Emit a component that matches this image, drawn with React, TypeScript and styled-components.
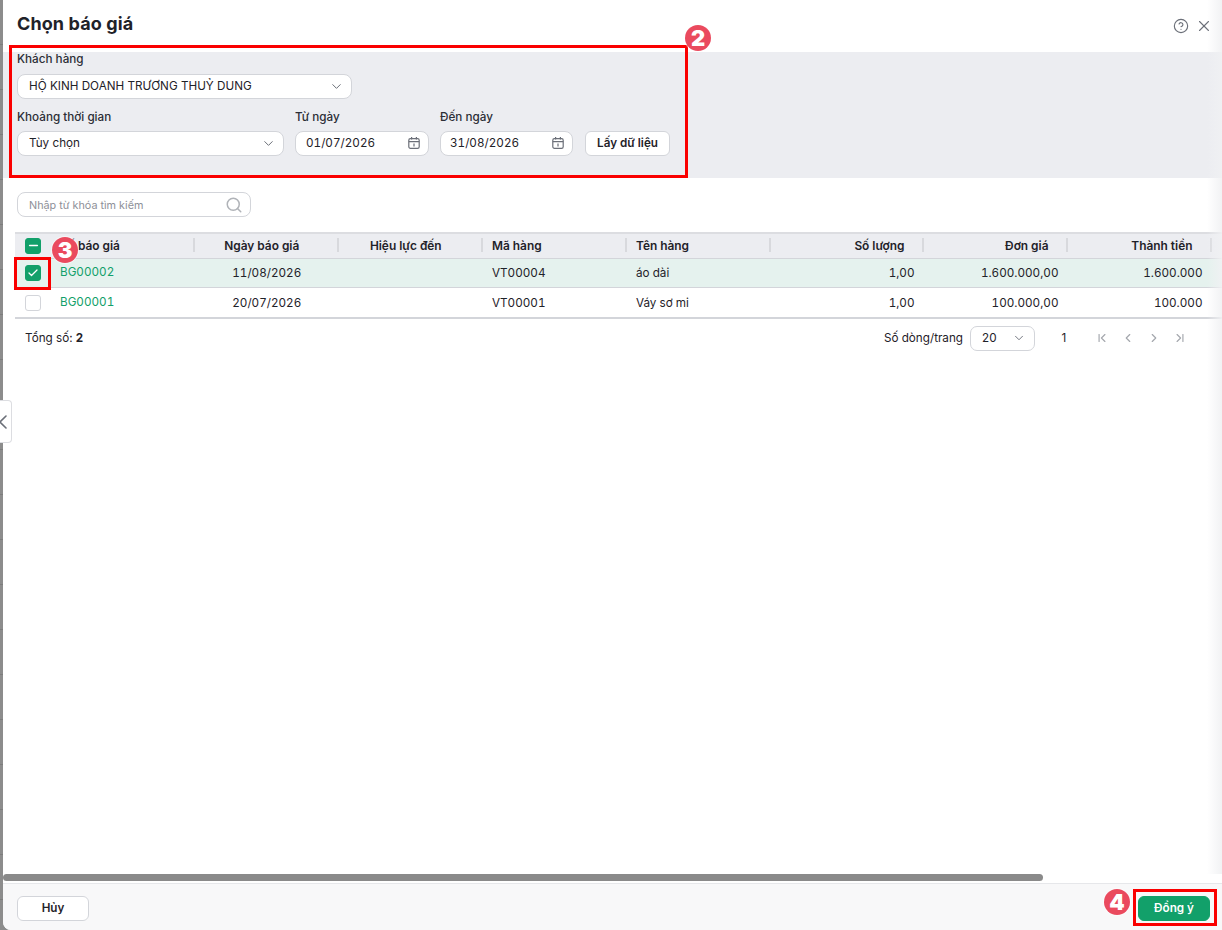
import * as React from 'react';
import styled, { createGlobalStyle } from 'styled-components';
import {
  Check,
  ChevronDown,
  ChevronFirst,
  ChevronLast,
  ChevronLeft,
  ChevronRight,
  CircleHelp,
  Minus,
  Search,
  X,
} from 'lucide-react';

const GlobalStyle = createGlobalStyle`
  html, body {
    margin: 0;
    padding: 0;
    background: #8a8a8a;
  }
  * {
    box-sizing: border-box;
  }
  body {
    font-family: Inter, "Noto Sans", sans-serif;
    font-size: 11.7px;
    color: #1f2229;
  }
`;

// the dimmed app behind the dialog only shows as a thin strip on the left
const Page = styled.div`
  position: relative;
  width: 1222px;
  height: 930px;
  padding-left: 3px;
  overflow: hidden;
  background: repeating-linear-gradient(#8c8c8c 0 44px, #7d7d7d 44px 45px);
`;

const Dialog = styled.div`
  display: flex;
  flex-direction: column;
  height: 100%;
  background: #fff;
  border-bottom-left-radius: 8px;
  overflow: hidden;
`;

const Header = styled.header`
  display: flex;
  align-items: center;
  justify-content: space-between;
  height: 52px;
  padding: 0 9px 5px 14px;
`;

const Title = styled.h1`
  margin: 0;
  font-size: 18px;
  font-weight: 700;
  letter-spacing: 0.1px;
  color: #1f2229;
`;

const HeaderActions = styled.div`
  display: flex;
  align-items: center;
  gap: 6px;
  margin-top: 5px;
  color: #6b6f78;
`;

const FilterPanel = styled.section`
  display: flex;
  flex-direction: column;
  height: 126px;
  padding: 0 14px;
  background: #ecedf1;
`;

const FieldRow = styled.div`
  display: flex;
  align-items: flex-end;
  gap: 11px;
  margin-top: ${(p: { $top: number }) => p.$top}px;
`;

const Field = styled.label`
  display: flex;
  flex-direction: column;
  gap: ${(p: { $width: number; $gap?: number }) => p.$gap ?? 7}px;
  width: ${(p: { $width: number; $gap?: number }) => p.$width}px;
`;

const FieldLabel = styled.span`
  font-size: 11.7px;
  font-weight: 500;
  line-height: 14px;
  color: #2b2e36;
`;

const Control = styled.div`
  display: flex;
  align-items: center;
  justify-content: space-between;
  height: 25px;
  padding: 0 7px 1px ${(p: { $left?: number }) => p.$left ?? 11}px;
  background: #fff;
  border: 1px solid #d3d5da;
  border-radius: 8px;
  font-size: 11.7px;
  color: #1f2229;
  white-space: nowrap;
  svg {
    flex: none;
    color: #6b6f78;
  }
`;

const DateControl = styled(Control)`
  font-variant-numeric: tabular-nums;
`;

const GhostButton = styled.button`
  height: 25px;
  width: ${(p: { $width: number }) => p.$width}px;
  padding: 0 0 2px;
  background: #fff;
  border: 1px solid #d3d5da;
  border-radius: 6px;
  font: 600 11.7px Inter, sans-serif;
  color: #1f2229;
`;

const FetchButton = styled(GhostButton)`
  margin-left: 1px;
`;

const SearchRow = styled.div`
  height: 54px;
  padding: 14px 0 0 14px;
`;

const SearchBox = styled(Control)`
  width: 234px;
  padding: 1px 7px 0 11px;
  color: #8d9098;
  font-size: 10.8px;
  svg {
    color: #b0b3b8;
  }
`;

const TableWrap = styled.div`
  position: relative;
  margin-left: 12px;
  width: 1300px;
`;

const GRID = '36px repeat(5, 144px) 153px 144px 144px 200px';

const HeadRow = styled.div`
  display: grid;
  grid-template-columns: ${GRID};
  height: 27px;
  padding-bottom: 1px;
  background: #ecedf1;
  border-top: 2px solid #dcdde1;
  border-bottom: 1px solid #d3d5da;
  font-size: 11.9px;
  font-weight: 600;
`;

const Row = styled.div`
  display: grid;
  grid-template-columns: ${GRID};
  height: ${(p: { $height: number; $selected?: boolean }) => p.$height}px;
  background: ${(p: { $selected?: boolean }) => (p.$selected ? '#e5f2ee' : '#fff')};
  border-bottom: 1px solid #d3d5da;
`;

const LastRow = styled(Row)`
  border-bottom: 2px solid #d3d5da;
`;

const HeadCell = styled.div`
  position: relative;
  display: flex;
  align-items: center;
  justify-content: ${(p: { $align?: string }) => p.$align ?? 'flex-start'};
  padding: 0 ${(p: { $align?: string }) => (p.$align ? 19.5 : 9)}px 0 9px;
  white-space: nowrap;
  overflow: hidden;
  &::after {
    content: '';
    position: absolute;
    right: 0;
    top: 4px;
    width: 2px;
    height: 14px;
    background: #d8d9dd;
  }
`;

const Cell = styled.div`
  display: flex;
  align-items: center;
  justify-content: ${(p: { $align?: string }) => p.$align ?? 'flex-start'};
  padding: 0 9.5px 0 9px;
  white-space: nowrap;
  font-size: 11.7px;
  font-variant-numeric: tabular-nums;
`;

const CodeCell = styled(Cell)`
  color: #12a06a;
  padding-bottom: 2px;
`;

const BoxCell = styled.div`
  display: flex;
  align-items: center;
  justify-content: center;
`;

const CheckBox = styled.span`
  display: flex;
  align-items: center;
  justify-content: center;
  width: 16px;
  height: 16px;
  border-radius: 3px;
  background: ${(p: { $on?: boolean }) => (p.$on ? '#12a06a' : '#fff')};
  border: 1px solid ${(p: { $on?: boolean }) => (p.$on ? '#12a06a' : '#d3d5da')};
  color: #fff;
`;

const Pager = styled.div`
  display: flex;
  align-items: center;
  height: 38px;
  padding: 0 35px 0 22px;
`;

const Total = styled.div`
  flex: 1;
  b {
    font-weight: 700;
  }
`;

const PageSizeLabel = styled.span`
  margin-right: 7px;
`;

const PageSize = styled(Control)`
  width: 65px;
  padding: 0 8px 1px 11px;
  border-radius: 7px;
`;

const PageNumber = styled.span`
  width: 58px;
  text-align: center;
`;

const PageIcons = styled.div`
  display: flex;
  gap: 12px;
  color: #a4a7ad;
  margin-left: 2px;
`;

const Spacer = styled.div`
  flex: 1;
`;

const ScrollTrack = styled.div`
  height: 9px;
  padding-bottom: 2px;
  background: #fff;
`;

const ScrollThumb = styled.div`
  height: 7px;
  width: ${(p: { $width: number }) => p.$width}px;
  background: #8a8a8a;
  border-radius: 4px;
`;

const Footer = styled.footer`
  display: flex;
  align-items: center;
  justify-content: space-between;
  height: 47px;
  padding: 3px 12px 0 14px;
  background: #f8f8f9;
  border-top: 1px solid #e6e7ea;
`;

const PrimaryButton = styled(GhostButton)`
  background: #12a06a;
  border-color: #12a06a;
  color: #fff;
`;

const EdgeFade = styled.div`
  position: absolute;
  top: 0;
  right: 0;
  bottom: 56px;
  width: 15px;
  background: linear-gradient(to right, rgba(255, 255, 255, 0), rgba(240, 241, 243, 0.9));
  pointer-events: none;
`;

const SideTab = styled.div`
  position: absolute;
  left: 0;
  top: 400px;
  display: flex;
  align-items: center;
  width: 12px;
  height: 43px;
  background: #fff;
  border: 1px solid #dcdde1;
  border-left: 0;
  border-radius: 0 4px 4px 0;
  color: #6b6f78;
  svg {
    flex: none;
    margin-left: -9px;
  }
`;

const Marker = styled.div`
  position: absolute;
  left: ${(p: { $x: number; $y: number; $w: number; $h: number }) => p.$x}px;
  top: ${(p: { $x: number; $y: number; $w: number; $h: number }) => p.$y}px;
  width: ${(p: { $x: number; $y: number; $w: number; $h: number }) => p.$w}px;
  height: ${(p: { $x: number; $y: number; $w: number; $h: number }) => p.$h}px;
  border: 3px solid #fa0000;
  pointer-events: none;
`;

const Badge = styled.div`
  position: absolute;
  left: ${(p: { $x: number; $y: number }) => p.$x - 13}px;
  top: ${(p: { $x: number; $y: number }) => p.$y - 13}px;
  display: flex;
  align-items: center;
  justify-content: center;
  width: 26px;
  height: 26px;
  border-radius: 50%;
  background: #ea4a5e;
  box-shadow: 0 0 0 1px rgba(255, 255, 255, 0.5);
  color: #fff;
  font: 900 22px Inter, sans-serif;
  line-height: 26px;
`;

const CalendarIcon = () => (
  <svg width="14" height="14" viewBox="0 0 14 14" fill="none" stroke="#6b6f78" strokeWidth="1.2">
    <rect x="1.8" y="2.6" width="10.4" height="9.8" rx="1.6" />
    <path d="M1.8 5.6h10.4M4.6 1v2.6M9.4 1v2.6M7 7.6v3" />
  </svg>
);

type Quote = {
  code: string;
  date: string;
  item: string;
  name: string;
  qty: string;
  price: string;
  total: string;
};

const quotes: Quote[] = [
  {
    code: 'BG00002',
    date: '11/08/2026',
    item: 'VT00004',
    name: 'áo dài',
    qty: '1,00',
    price: '1.600.000,00',
    total: '1.600.000',
  },
  {
    code: 'BG00001',
    date: '20/07/2026',
    item: 'VT00001',
    name: 'Váy sơ mi',
    qty: '1,00',
    price: '100.000,00',
    total: '100.000',
  },
];

const QuoteCells = ({ quote, on }: { quote: Quote; on: boolean }) => (
  <>
    <BoxCell>
      <CheckBox $on={on}>{on && <Check size={12} strokeWidth={2.5} />}</CheckBox>
    </BoxCell>
    <CodeCell>{quote.code}</CodeCell>
    <Cell $align="center">{quote.date}</Cell>
    <Cell />
    <Cell>{quote.item}</Cell>
    <Cell>{quote.name}</Cell>
    <Cell $align="flex-end">{quote.qty}</Cell>
    <Cell $align="flex-end">{quote.price}</Cell>
    <Cell $align="flex-end">{quote.total}</Cell>
    <Cell />
  </>
);

export default function App() {
  return (
    <Page>
      <GlobalStyle />
      <Dialog>
        <Header>
          <Title>Chọn báo giá</Title>
          <HeaderActions>
            <CircleHelp size={16} strokeWidth={1.7} />
            <X size={18} strokeWidth={1.5} />
          </HeaderActions>
        </Header>

        <FilterPanel>
          <FieldRow $top={0}>
            <Field $width={335} $gap={8}>
              <FieldLabel>Khách hàng</FieldLabel>
              <Control>
                HỘ KINH DOANH TRƯƠNG THUỶ DUNG
                <ChevronDown size={15} strokeWidth={1.6} />
              </Control>
            </Field>
          </FieldRow>
          <FieldRow $top={11}>
            <Field $width={267}>
              <FieldLabel>Khoảng thời gian</FieldLabel>
              <Control>
                Tùy chọn
                <ChevronDown size={15} strokeWidth={1.6} />
              </Control>
            </Field>
            <Field $width={134}>
              <FieldLabel>Từ ngày</FieldLabel>
              <DateControl $left={10}>
                01/07/2026
                <CalendarIcon />
              </DateControl>
            </Field>
            <Field $width={133}>
              <FieldLabel>Đến ngày</FieldLabel>
              <DateControl $left={9}>
                31/08/2026
                <CalendarIcon />
              </DateControl>
            </Field>
            <FetchButton $width={85}>Lấy dữ liệu</FetchButton>
          </FieldRow>
        </FilterPanel>

        <SearchRow>
          <SearchBox>
            Nhập từ khóa tìm kiếm
            <Search size={18} />
          </SearchBox>
        </SearchRow>

        <TableWrap>
          <HeadRow>
            <BoxCell>
              <CheckBox $on>
                <Minus size={13} strokeWidth={3} />
              </CheckBox>
            </BoxCell>
            <HeadCell>Số báo giá</HeadCell>
            <HeadCell $align="center">Ngày báo giá</HeadCell>
            <HeadCell $align="center">Hiệu lực đến</HeadCell>
            <HeadCell>Mã hàng</HeadCell>
            <HeadCell>Tên hàng</HeadCell>
            <HeadCell $align="flex-end">Số lượng</HeadCell>
            <HeadCell $align="flex-end">Đơn giá</HeadCell>
            <HeadCell $align="flex-end">Thành tiền</HeadCell>
            <HeadCell />
          </HeadRow>
          <Row $height={29} $selected>
            <QuoteCells quote={quotes[0]} on />
          </Row>
          <LastRow $height={31}>
            <QuoteCells quote={quotes[1]} on={false} />
          </LastRow>
        </TableWrap>

        <Pager>
          <Total>
            Tổng số: <b>2</b>
          </Total>
          <PageSizeLabel>Số dòng/trang</PageSizeLabel>
          <PageSize>
            20
            <ChevronDown size={14} strokeWidth={1.6} />
          </PageSize>
          <PageNumber>1</PageNumber>
          <PageIcons>
            <ChevronFirst size={14} />
            <ChevronLeft size={14} />
            <ChevronRight size={14} />
            <ChevronLast size={14} />
          </PageIcons>
        </Pager>

        <Spacer />

        <ScrollTrack>
          <ScrollThumb $width={1040} />
        </ScrollTrack>

        <Footer>
          <GhostButton $width={72}>Hủy</GhostButton>
          <PrimaryButton $width={72}>Đồng ý</PrimaryButton>
        </Footer>
      </Dialog>

      <EdgeFade />
      <SideTab>
        <ChevronLeft size={24} strokeWidth={1.6} />
      </SideTab>

      <Marker $x={9} $y={45} $w={679} $h={133} />
      <Marker $x={14} $y={257} $w={37} $h={33} />
      <Marker $x={1133} $y={889} $w={84} $h={37} />
      <Badge $x={698} $y={38}>2</Badge>
      <Badge $x={65} $y={250}>3</Badge>
      <Badge $x={1117} $y={902}>4</Badge>
    </Page>
  );
}
